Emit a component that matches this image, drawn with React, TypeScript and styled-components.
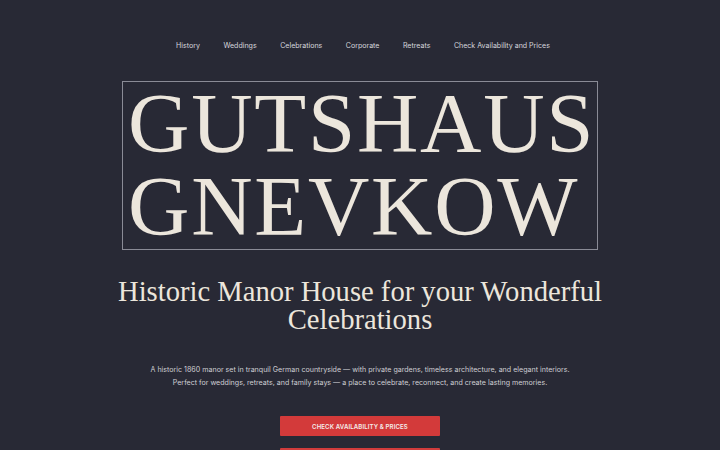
import styled, { createGlobalStyle } from "styled-components";

const GlobalStyle = createGlobalStyle`
  html, body {
    margin: 0;
    padding: 0;
    background: #282935;
  }
  * {
    box-sizing: border-box;
  }
`;

const Page = styled.div`
  min-height: 450px;
  background: #282935;
  display: flex;
  flex-direction: column;
  align-items: center;
  font-family: Inter, "Noto Sans", sans-serif;
  color: #ece6dc;
`;

const Nav = styled.nav`
  display: flex;
  gap: 23.5px;
  padding: 40px 0 0 6px;
  height: 81px;
`;

const NavLink = styled.a`
  font-size: 7.05px;
  line-height: 12px;
  color: #d6d6dc;
  text-decoration: none;
  cursor: pointer;
`;

const TitleBox = styled.h1`
  margin: 0;
  width: 476px;
  padding: 0 5px 1px;
  border: 1px solid #8a8b96;
  font-family: "Liberation Serif", "DejaVu Serif", serif;
  font-weight: 400;
  font-size: 85px;
  line-height: 83px;
  letter-spacing: 1.75px;
  color: #ece6dc;
`;

const Subtitle = styled.h2`
  margin: 28px 0 0;
  width: 500px;
  text-align: center;
  font-family: "Liberation Serif", "DejaVu Serif", serif;
  font-weight: 400;
  font-size: 28.6px;
  line-height: 28px;
  color: #ece6dc;
`;

const Lead = styled.p`
  margin: 29px 0 0;
  text-align: center;
  font-size: 7.1px;
  line-height: 13px;
  color: #cfcfd4;
`;

const Actions = styled.div`
  display: flex;
  flex-direction: column;
  gap: 12px;
  margin-top: 27px;
`;

const Button = styled.button<{ $ghost?: boolean }>`
  width: 160px;
  height: 20px;
  border: none;
  border-radius: 1px;
  background: ${(p) => (p.$ghost ? "#d13c3c" : "#d33a3a")};
  color: #f4ecea;
  font-family: Inter, "Noto Sans", sans-serif;
  font-size: 6.1px;
  font-weight: 600;
  letter-spacing: 0.1px;
  text-transform: uppercase;
  cursor: pointer;
`;

const links = ["History", "Weddings", "Celebrations", "Corporate", "Retreats", "Check Availability and Prices"];

export default function App() {
  return (
    <>
      <GlobalStyle />
      <Page>
        <Nav>
          {links.map((l) => (
            <NavLink key={l}>{l}</NavLink>
          ))}
        </Nav>
        <TitleBox>
          GUTSHAUS
          <br />
          GNEVKOW
        </TitleBox>
        <Subtitle>Historic Manor House for your Wonderful Celebrations</Subtitle>
        <Lead>
          A historic 1860 manor set in tranquil German countryside — with private gardens, timeless architecture, and elegant interiors.
          <br />
          Perfect for weddings, retreats, and family stays — a place to celebrate, reconnect, and create lasting memories.
        </Lead>
        <Actions>
          <Button>Check Availability &amp; Prices</Button>
          <Button $ghost>Contact Us</Button>
        </Actions>
      </Page>
    </>
  );
}
